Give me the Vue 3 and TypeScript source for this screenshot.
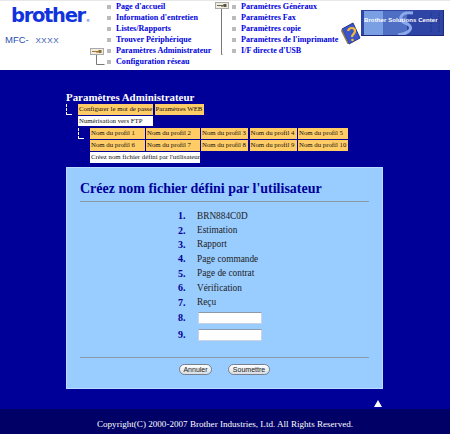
<script setup lang="ts">
const navLeft = ["Page d'accueil", "Information d'entretien", 'Listes/Rapports', 'Trouver Périphérique', 'Paramètres Administrateur', 'Configuration réseau']
const navRight = ['Paramètres Généraux', 'Paramètres Fax', 'Paramètres copie', "Paramètres de l'imprimante", "I/F directe d'USB"]
const profiles = [1, 2, 3, 4, 5, 6, 7, 8, 9, 10].map((n) => `Nom du profil ${n}`)
const fixedNames = ['BRN884C0D', 'Estimation', 'Rapport', 'Page commande', 'Page de contrat', 'Vérification', 'Reçu']
</script>

<template>
  <div class="page">
    <header class="header">
      <div class="brand">
        <div class="logo">brother<span class="reg">®</span></div>
        <div class="model">MFC- <span class="model-x">XXXX</span></div>
      </div>
      <ul class="nav nav-left">
        <li v-for="item in navLeft" :key="item"><i class="bullet"></i>{{ item }}</li>
        <svg class="key key-left" width="24" height="26" viewBox="0 0 24 26">
          <rect x="0.5" y="0.5" width="13" height="6" fill="#f0ece0" stroke="#aaa" />
          <path d="M2 3.500h7M7 3.500v1.500" stroke="#a87830" stroke-width="1.200" fill="none" />
          <rect x="8.500" y="2" width="3" height="3" fill="#8a6a30" />
          <path d="M6.500 7v9.500h8" fill="none" stroke="#777" />
        </svg>
      </ul>
      <ul class="nav nav-right">
        <li v-for="item in navRight" :key="item"><i class="bullet"></i>{{ item }}</li>
        <svg class="key key-right" width="24" height="54" viewBox="0 0 24 54">
          <rect x="0.5" y="0.5" width="13" height="6" fill="#f0ece0" stroke="#aaa" />
          <path d="M2 3.500h7M7 3.500v1.500" stroke="#665" stroke-width="1.200" fill="none" />
          <rect x="8.500" y="2" width="3" height="3" fill="#554" />
          <path d="M6.500 7v45.500h1" fill="none" stroke="#777" />
        </svg>
      </ul>
      <div class="promo">
        <svg class="book" width="20" height="23" viewBox="0 0 20 23">
          <path d="M1 7 12 1l7 15-11 6z" fill="#3a55c8" stroke="#27378a" />
          <path d="M1 7l7 15-1.500 0L0 9z" fill="#8a7a50" />
          <path d="M7 9c1-4 7-4 7 0 0 3-3 3-3 6" fill="none" stroke="#f5b93a" stroke-width="2.200" />
          <circle cx="11.500" cy="18" r="1.300" fill="#f5b93a" />
        </svg>
        <div class="banner">
          <svg class="banner-art" width="83" height="26" viewBox="0 0 83 26">
            <rect width="83" height="26" fill="#2f45a6" />
            <rect x="3" y="1" width="19" height="24" fill="#7a9fe2" />
            <rect x="22" y="1" width="24" height="24" fill="#4f6fc4" />
            <path d="M52 3C38 1 37 11 44 13s10 9-7 12" fill="none" stroke="#8aa8ea" stroke-width="3" />
            <path d="M70 3v19M78 3v19M70 10h9" stroke="#1d2c80" stroke-dasharray="1 1" fill="none" />
            <path d="M82.500 0v26M0 25.500h83" stroke="#1b2a78" fill="none" />
          </svg>
          <span class="banner-text">Brother Solutions Center</span>
        </div>
      </div>
    </header>

    <main class="main">
      <h2 class="section-title">Paramètres Administrateur</h2>
      <div class="tree">
        <span class="elbow"></span>
        <div class="tree-body">
          <div class="tab-row">
            <span class="tab tab-a">Configurer le mot de passe</span>
            <span class="tab tab-b">Paramètres WEB</span>
          </div>
          <span class="tab tab-a current">Numérisation vers FTP</span>
          <div class="tree sub">
            <span class="elbow"></span>
            <div class="tree-body">
              <div class="profiles">
                <span v-for="p in profiles" :key="p" class="tab">{{ p }}</span>
              </div>
              <span class="tab current wide">Créez nom fichier défini par l'utilisateur</span>
            </div>
          </div>
        </div>
      </div>

      <section class="panel">
        <h1 class="panel-title">Créez nom fichier défini par l'utilisateur</h1>
        <hr class="rule" />
        <ol class="names">
          <li v-for="(name, i) in fixedNames" :key="name" class="name-row">
            <b class="num">{{ i + 1 }}.</b><span>{{ name }}</span>
          </li>
          <li class="name-row input-row"><b class="num">8.</b><input class="field" type="text" /></li>
          <li class="name-row input-row"><b class="num">9.</b><input class="field" type="text" /></li>
        </ol>
        <hr class="rule rule-low" />
        <div class="actions">
          <button class="btn btn-cancel" type="button">Annuler</button>
          <button class="btn btn-submit" type="button">Soumettre</button>
        </div>
      </section>
      <div class="top-row"><span class="top-arrow"></span></div>
    </main>

    <footer class="footer">Copyright(C) 2000-2007 Brother Industries, Ltd. All Rights Reserved.</footer>
  </div>
</template>

<style scoped>
.page {
  width: 450px;
  height: 434px;
  display: flex;
  flex-direction: column;
  overflow: hidden;
  font-family: "Liberation Serif", serif;
  background: #000099;
}
.header {
  height: 70px;
  flex: none;
  background: #fff;
  display: flex;
  border-top: 1px solid #e8e8e8;
  box-sizing: border-box;
  position: relative;
}
.brand {
  width: 107px;
  flex: none;
  padding: 5px 0 0 5px;
  box-sizing: border-box;
}
.logo {
  font: bold 19.500px/20px "DejaVu Sans", sans-serif;
  letter-spacing: -1.300px;
  color: #1133dd;
  padding-left: 6px;
  white-space: nowrap;
}
.reg {
  font-size: 4px;
  font-weight: normal;
  letter-spacing: 0;
  margin-left: 1px;
}
.model {
  font: 9.500px/10px "Liberation Sans", sans-serif;
  color: #2a4fb0;
  margin-top: 4px;
  white-space: pre;
}
.model-x {
  font-size: 8px;
  margin-left: 4px;
  letter-spacing: 0.600px;
}
.nav {
  list-style: none;
  margin: 0;
  padding: 0;
  font-weight: bold;
  font-size: 8.100px;
  line-height: 11px;
  color: #0000e0;
  position: relative;
}
.nav li {
  display: flex;
  align-items: center;
  white-space: nowrap;
}
.nav-left {
  width: 125px;
  flex: none;
}
.nav-right {
  width: 109px;
  flex: none;
}
.bullet {
  width: 4px;
  height: 4px;
  margin-right: 5px;
  background: #bbb;
  flex: none;
}
.key {
  position: absolute;
}
.key-left {
  left: -17px;
  top: 47px;
}
.key-right {
  left: -17px;
  top: 1px;
}
.promo {
  display: flex;
  align-items: flex-start;
  padding-top: 9px;
}
.book {
  margin-top: 12px;
  flex: none;
}
.banner {
  width: 83px;
  height: 26px;
  position: relative;
  flex: none;
}
.banner-art {
  display: block;
}
.banner-text {
  position: absolute;
  left: 3px;
  top: 6px;
  font: bold 6px/9px "Liberation Sans", sans-serif;
  letter-spacing: 0.100px;
  color: #fff;
  white-space: nowrap;
}
.main {
  flex: 1;
  padding-left: 66px;
  min-height: 0;
}
.section-title {
  margin: 20px 0 0;
  font-size: 10.900px;
  line-height: 14px;
  font-weight: bold;
  color: #fff;
  white-space: nowrap;
}
.tree {
  display: flex;
  align-items: flex-start;
}
.elbow {
  width: 5px;
  height: 10px;
  margin-right: 6px;
  border-left: 1px dashed #fff;
  border-bottom: 1px dashed #fff;
  flex: none;
}
.tree-body {
  display: flex;
  flex-direction: column;
  gap: 1px;
}
.sub {
  margin-top: 1px;
}
.tab-row {
  display: flex;
  gap: 1.500px;
}
.tab {
  height: 10.500px;
  line-height: 10.500px;
  font-size: 6.800px;
  padding-left: 1px;
  box-sizing: border-box;
  background: #ffcc66;
  color: #111;
  white-space: nowrap;
}
.tab-a {
  width: 75px;
}
.tab-b {
  width: 49px;
}
.current {
  background: #fff;
}
.wide {
  width: 110px;
  height: 11px;
}
.profiles {
  display: grid;
  grid-template-columns: 54.500px 53.500px 47px 47px 50px;
  gap: 1.500px;
}
.panel {
  width: 317px;
  height: 222px;
  margin-top: 4px;
  box-sizing: border-box;
  padding: 11px 13px 0;
  background: #99ccff;
  border: 1px solid #b8dcff;
}
.panel-title {
  margin: 0;
  font-size: 14px;
  line-height: 20px;
  font-weight: bold;
  color: #000099;
  white-space: nowrap;
}
.rule {
  margin: 0;
  border: 0;
  height: 1px;
  background: #8c99aa;
  margin-top: 2px;
}
.names {
  list-style: none;
  margin: 7px 0 0;
  padding: 0 0 0 98px;
  font-size: 9.300px;
  color: #222;
}
.name-row {
  display: flex;
  align-items: center;
  height: 14.400px;
}
.num {
  color: #000099;
  width: 19px;
  font-size: 10px;
}
.input-row {
  height: 17px;
}
.field {
  width: 64px;
  height: 12px;
  padding: 0;
  margin-left: 1px;
  box-sizing: border-box;
  background: #fff;
  border: 1px solid #c8d4e4;
  border-top-color: #8c99aa;
}
.rule-low {
  margin-top: 14px;
}
.actions {
  display: flex;
  gap: 16px;
  margin: 6px 0 0 99px;
}
.btn {
  height: 11px;
  padding: 0;
  font: 7px/9px "Liberation Sans", sans-serif;
  color: #222;
  background: linear-gradient(#fff, #d8dde4);
  border: 1px solid #77808c;
  border-radius: 6px;
}
.btn-cancel {
  width: 33px;
}
.btn-submit {
  width: 42px;
}
.top-row {
  width: 316px;
  display: flex;
  justify-content: flex-end;
  margin-top: 11px;
}
.top-arrow {
  width: 0;
  height: 0;
  border-left: 4px solid transparent;
  border-right: 4px solid transparent;
  border-bottom: 7px solid #fff;
}
.footer {
  height: 25px;
  flex: none;
  background: #000066;
  color: #fff;
  font-size: 9.100px;
  line-height: 30px;
  text-align: center;
  white-space: nowrap;
}
</style>
